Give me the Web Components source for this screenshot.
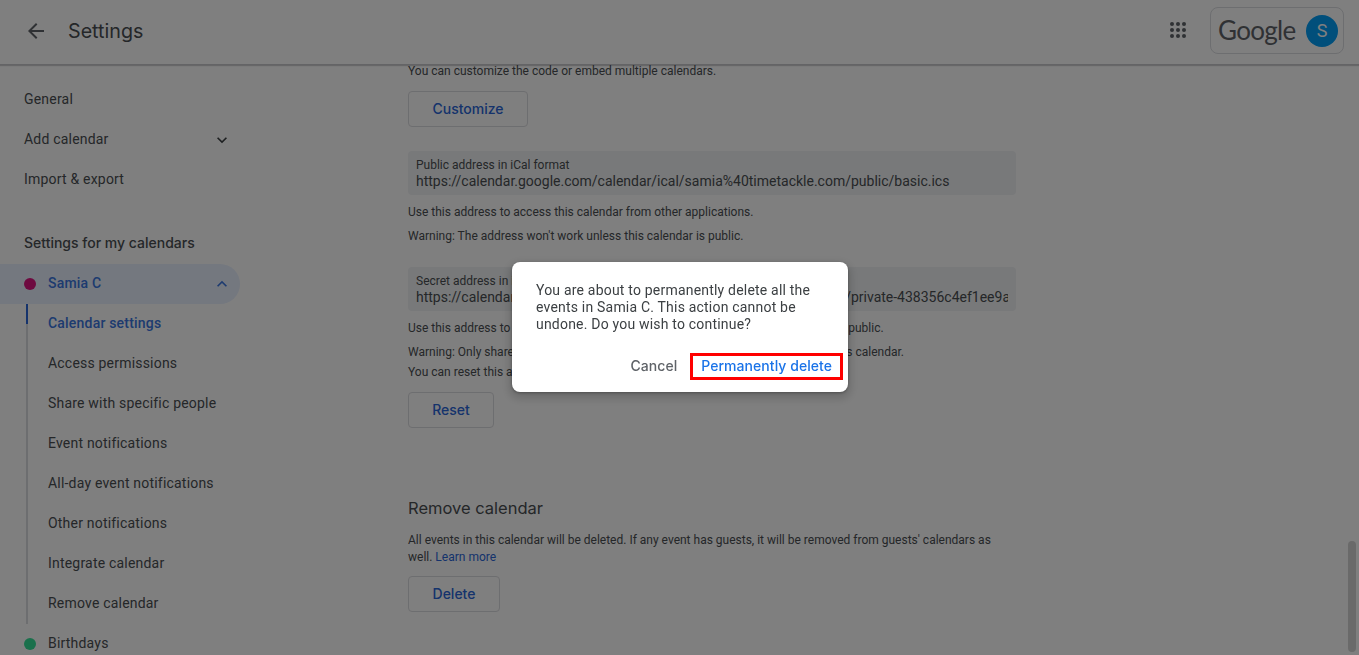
<!DOCTYPE html>
<html>
<head>
<meta charset="utf-8">
<title>Settings</title>
<style>
  html, body { margin: 0; height: 100%; overflow: hidden; background: #fff; }
  body { font-family: Roboto, "Liberation Sans", sans-serif; color: #3c4043; }
</style>
</head>
<body>
<gc-app>
  <gc-header slot="header" title-text="Settings"></gc-header>
  <gc-sidebar slot="sidebar">
    <gc-nav-item>General</gc-nav-item>
    <gc-nav-item chevron="down">Add calendar</gc-nav-item>
    <gc-nav-item>Import &amp; export</gc-nav-item>
    <gc-nav-heading>Settings for my calendars</gc-nav-heading>
    <gc-nav-item chevron="up" dot="#dc1480" selected>Samia C</gc-nav-item>
    <gc-nav-group>
      <gc-nav-item sub active>Calendar settings</gc-nav-item>
      <gc-nav-item sub>Access permissions</gc-nav-item>
      <gc-nav-item sub>Share with specific people</gc-nav-item>
      <gc-nav-item sub>Event notifications</gc-nav-item>
      <gc-nav-item sub>All-day event notifications</gc-nav-item>
      <gc-nav-item sub>Other notifications</gc-nav-item>
      <gc-nav-item sub>Integrate calendar</gc-nav-item>
      <gc-nav-item sub>Remove calendar</gc-nav-item>
    </gc-nav-group>
    <gc-nav-item dot="#34e098">Birthdays</gc-nav-item>
  </gc-sidebar>
  <gc-main slot="main">
    <gc-note style="margin-bottom:12px">You can customize the code or embed multiple calendars.</gc-note>
    <gc-button width="120">Customize</gc-button>
    <gc-address label="Public address in iCal format" style="margin-top:24px">https://calendar.google.com/calendar/ical/samia%40timetackle.com/public/basic.ics</gc-address>
    <gc-note style="margin-top:9px">Use this address to access this calendar from other applications.</gc-note>
    <gc-note style="margin-top:8px">Warning: The address won't work unless this calendar is public.</gc-note>
    <gc-address label="Secret address in iCal format" style="margin-top:23px">https://calendar.google.com/calendar/ical/samia%40timetackle.com/private-438356c4ef1ee9a5d0a1c7e2b94f3c61/basic.ics</gc-address>
    <gc-note style="margin-top:9px">Use this address to access this calendar from other applications without making it public.</gc-note>
    <gc-note style="margin-top:8px">Warning: Only share this address with those you trust to see all event details for this calendar.</gc-note>
    <gc-note style="margin-top:4px;margin-bottom:12px">You can reset this address and make the current one invalid.</gc-note>
    <gc-button width="86">Reset</gc-button>
    <gc-section-title style="margin-top:68px">Remove calendar</gc-section-title>
    <gc-note style="margin-top:12px;line-height:17px">All events in this calendar will be deleted. If any event has guests, it will be removed from guests' calendars as well. <a>Learn more</a></gc-note>
    <gc-button width="92" style="margin-top:10px">Delete</gc-button>
  </gc-main>
</gc-app>
<gc-scrollbar></gc-scrollbar>
<gc-dialog>
  You are about to permanently delete all the events in Samia C. This action cannot be undone. Do you wish to continue?
  <gc-dialog-action slot="actions">Cancel</gc-dialog-action>
  <gc-dialog-action slot="actions" primary>Permanently delete</gc-dialog-action>
</gc-dialog>

<script>
// small helper so each element only has to give its markup
class ShadowElement extends HTMLElement {
  constructor() {
    super();
    this._shadowDOM = this.attachShadow({mode: "open"});
  }
  connectedCallback() {
    this.render();
  }
}

class GcApp extends ShadowElement {
  render() {
    this._shadowDOM.innerHTML = `
    <style>
      :host { display: flex; flex-direction: column; height: 100vh; overflow: hidden; }
      .body { flex: 1; min-height: 0; display: flex; overflow: hidden; }
    </style>
    <slot name="header"></slot>
    <div class="body">
      <slot name="sidebar"></slot>
      <slot name="main"></slot>
    </div>`;
  }
}

class GcHeader extends ShadowElement {
  render() {
    this._shadowDOM.innerHTML = `
    <style>
      :host { display: flex; align-items: center; height: 64px; flex: none; padding: 0 15px 0 24px;
              border-bottom: 1px solid #c8c9cc; box-shadow: 0 1px 1px rgba(60,64,67,.25); position: relative; }
      svg { display: block; fill: #5f6368; }
      .back { position: relative; top: -1px; }
      h1 { margin: 0 0 0 20px; font: 400 19.7px/28px Inter, sans-serif; color: #4a4e52; flex: 1; position: relative; top: -1px; }
      .apps { margin-right: 20px; position: relative; top: -2px; }
      .account { display: flex; align-items: center; justify-content: space-between; box-sizing: border-box; width: 134px; height: 47px;
                 padding: 0 5px 0 7px; border: 1px solid #dadce0; border-radius: 8px; position: relative; top: -2px; }
      .word { font: 400 26px/32px Lato, sans-serif; letter-spacing: -.7px; color: #5f6368; }
      .avatar { width: 32px; height: 32px; border-radius: 50%; background: #029ef6; color: #fff; font: 400 18px/32px Roboto, sans-serif; text-align: center; position: relative; top: 1px; }
    </style>
    <svg class="back" width="24" height="24" viewBox="0 0 24 24"><path d="M20 11H7.83l5.59-5.59L12 4l-8 8 8 8 1.41-1.41L7.83 13H20v-2z"/></svg>
    <h1>${this.getAttribute("title-text")}</h1>
    <svg class="apps" width="24" height="24" viewBox="0 0 24 24">
      <circle cx="6" cy="6" r="2"/><circle cx="12" cy="6" r="2"/><circle cx="18" cy="6" r="2"/>
      <circle cx="6" cy="12" r="2"/><circle cx="12" cy="12" r="2"/><circle cx="18" cy="12" r="2"/>
      <circle cx="6" cy="18" r="2"/><circle cx="12" cy="18" r="2"/><circle cx="18" cy="18" r="2"/>
    </svg>
    <div class="account"><span class="word">Google</span><span class="avatar">S</span></div>`;
  }
}

class GcSidebar extends ShadowElement {
  render() {
    this._shadowDOM.innerHTML = `
    <style>
      :host { display: block; flex: none; width: 240px; padding-top: 15px; }
    </style>
    <slot></slot>`;
  }
}

class GcNavItem extends ShadowElement {
  render() {
    const dot = this.getAttribute("dot");
    const chevron = this.getAttribute("chevron");
    const chevronPath = chevron === "up"
      ? "M12 8l-6 6 1.41 1.41L12 10.83l4.59 4.58L18 14z"
      : "M16.59 8.59L12 13.17 7.41 8.59 6 10l6 6 6-6z";
    this._shadowDOM.innerHTML = `
    <style>
      :host { display: flex; align-items: center; height: 40px; padding-left: 24px; padding-right: 8px; box-sizing: border-box;
              font: 400 14px/20px Roboto, sans-serif; letter-spacing: .2px; color: #4a4e52; }
      :host([selected]) { background: #e8f0fe; border-radius: 0 20px 20px 0; color: #3a76e0; font-weight: 500; }
      :host([active]) { color: #3a76e0; font-weight: 500; }
      :host([sub]) { padding-left: 20px; }
      .label { flex: 1; position: relative; top: -1px; }
      .dot { width: 12px; height: 12px; border-radius: 50%; margin-right: 12px; }
      svg { display: block; fill: currentColor; }
      :host(:not([selected])) svg { fill: #3c4043; }
    </style>
    ${dot ? `<span class="dot" style="background:${dot}"></span>` : ""}
    <span class="label"><slot></slot></span>
    ${chevron ? `<svg width="20" height="20" viewBox="0 0 24 24"><path d="${chevronPath}"/></svg>` : ""}`;
  }
}

class GcNavHeading extends ShadowElement {
  render() {
    this._shadowDOM.innerHTML = `
    <style>
      :host { display: block; margin-top: 24px; height: 40px; padding-left: 24px;
              font: 500 14px/38px Inter, sans-serif; color: #4a4e52; }
    </style>
    <slot></slot>`;
  }
}

class GcNavGroup extends ShadowElement {
  render() {
    this._shadowDOM.innerHTML = `
    <style>
      :host { display: block; margin: 10px 0 10px 26px;
              background: linear-gradient(#2a66d8 20px, #dadce0 20px) left top / 2px 100% no-repeat; }
      .inner { margin: -10px 0; padding-left: 2px; }
    </style>
    <div class="inner"><slot></slot></div>`;
  }
}

class GcMain extends ShadowElement {
  render() {
    this._shadowDOM.innerHTML = `
    <style>
      :host { display: block; margin-left: 168px; margin-top: -2px; width: 608px; flex: none; }
    </style>
    <slot></slot>`;
  }
}

class GcNote extends ShadowElement {
  render() {
    this._shadowDOM.innerHTML = `
    <style>
      :host { display: block; font: 400 12px/16px Roboto, sans-serif; color: #4a4e52; }
      ::slotted(a) { color: #2a66d8; }
    </style>
    <slot></slot>`;
  }
}

class GcButton extends ShadowElement {
  render() {
    this._shadowDOM.innerHTML = `
    <style>
      :host { display: block; box-sizing: border-box; width: ${this.getAttribute("width")}px; height: 36px;
              border: 1px solid #dadce0; border-radius: 4px; text-align: center;
              font: 500 14px/33px Inter, sans-serif; color: #2a66d8; }
    </style>
    <slot></slot>`;
  }
}

class GcAddress extends ShadowElement {
  render() {
    this._shadowDOM.innerHTML = `
    <style>
      :host { display: block; box-sizing: border-box; height: 44px; padding: 6px 8px 0; background: #f1f3f4; border-radius: 4px; overflow: hidden; color: #4a4e52; }
      .label { font: 400 12px/16px Roboto, sans-serif; }
      .value { font: 400 14px/16px Roboto, sans-serif; white-space: nowrap; overflow: hidden; }
    </style>
    <div class="label">${this.getAttribute("label")}</div>
    <div class="value"><slot></slot></div>`;
  }
}

class GcSectionTitle extends ShadowElement {
  render() {
    this._shadowDOM.innerHTML = `
    <style>
      :host { display: block; font: 400 16.5px/24px Inter, sans-serif; color: #4a4e52; }
    </style>
    <slot></slot>`;
  }
}

class GcScrollbar extends ShadowElement {
  render() {
    this._shadowDOM.innerHTML = `
    <style>
      :host { position: fixed; left: 1348px; top: 541px; width: 8px; height: 111px; border-radius: 4px; background: #d5d5d5; }
    </style>`;
  }
}

class GcDialog extends ShadowElement {
  render() {
    this._shadowDOM.innerHTML = `
    <style>
      :host { position: fixed; inset: 0; display: flex; align-items: center; justify-content: center; background: rgba(0,0,0,.5); }
      .box { box-sizing: border-box; width: 336px; height: 130px; margin: -1px 0 0 1px; background: #fff; border-radius: 8px;
             box-shadow: 0 1px 3px rgba(0,0,0,.3), 0 4px 8px 3px rgba(0,0,0,.15); padding-top: 20px; }
      .message { padding: 0 24px; font: 400 14px/17px Roboto, sans-serif; letter-spacing: .2px; color: #3c4043; }
      .actions { display: flex; justify-content: flex-end; align-items: center; gap: 2px; margin: 20px 5px 0 0; }
    </style>
    <div class="box">
      <div class="message"><slot></slot></div>
      <div class="actions"><slot name="actions"></slot></div>
    </div>`;
  }
}

class GcDialogAction extends ShadowElement {
  render() {
    this._shadowDOM.innerHTML = `
    <style>
      :host { display: block; box-sizing: border-box; height: 27px; border: 3px solid transparent; padding: 0 8px;
              font: 500 14px/20px Inter, sans-serif; letter-spacing: .05px; color: #5f6368; }
      :host([primary]) { border-color: #f00; color: #1a73e8; }
    </style>
    <slot></slot>`;
  }
}

customElements.define("gc-app", GcApp);
customElements.define("gc-header", GcHeader);
customElements.define("gc-sidebar", GcSidebar);
customElements.define("gc-nav-item", GcNavItem);
customElements.define("gc-nav-heading", GcNavHeading);
customElements.define("gc-nav-group", GcNavGroup);
customElements.define("gc-main", GcMain);
customElements.define("gc-note", GcNote);
customElements.define("gc-button", GcButton);
customElements.define("gc-address", GcAddress);
customElements.define("gc-section-title", GcSectionTitle);
customElements.define("gc-scrollbar", GcScrollbar);
customElements.define("gc-dialog", GcDialog);
customElements.define("gc-dialog-action", GcDialogAction);
</script>
</body>
</html>
